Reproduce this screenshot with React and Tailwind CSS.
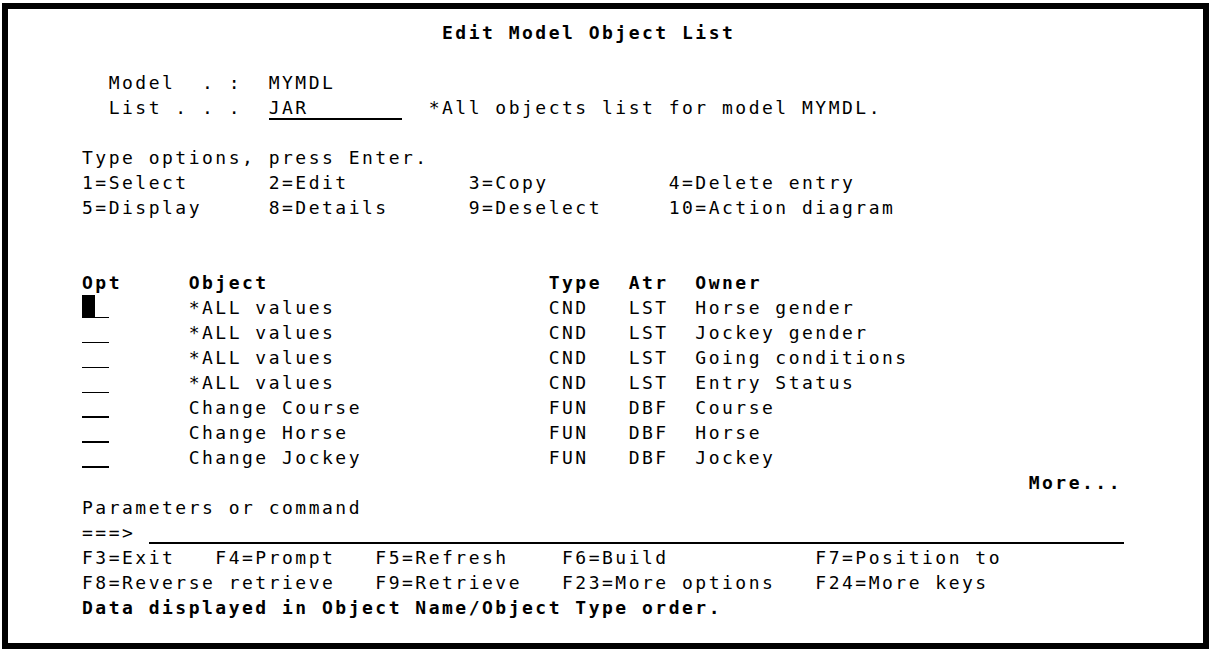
import React from 'react';

// 5250-style green-screen (here: black on white), one row = 25px, one column = 13.333px
const Row = ({ children, bold }) => (
    <div className={`h-[25px] leading-[25px] whitespace-pre ${bold ? 'font-bold' : ''}`}>{children}</div>
);

const OptField = ({ thick }) => (
    <span className={`inline-block align-top w-[26.667px] h-[23px] border-black ${thick ? 'border-b-2' : 'border-b'}`} />
);

const CursorField = () => (
    <span className="inline-flex align-top w-[26.667px] h-[23px]">
        <span className="w-[12.5px] h-[23px] bg-black" />
        <span className="ml-[0.833px] w-[13.333px] h-[23px] border-b border-black" />
    </span>
);

const rows = [
    { obj: '*ALL values', type: 'CND', atr: 'LST', owner: 'Horse gender' },
    { obj: '*ALL values', type: 'CND', atr: 'LST', owner: 'Jockey gender' },
    { obj: '*ALL values', type: 'CND', atr: 'LST', owner: 'Going conditions' },
    { obj: '*ALL values', type: 'CND', atr: 'LST', owner: 'Entry Status' },
    { obj: 'Change Course', type: 'FUN', atr: 'DBF', owner: 'Course' },
    { obj: 'Change Horse', type: 'FUN', atr: 'DBF', owner: 'Horse' },
    { obj: 'Change Jockey', type: 'FUN', atr: 'DBF', owner: 'Jockey' },
];

const App = () => {
    return (
        <div className="w-[1211px] h-[652px] bg-white pt-[3px] pl-[2px] text-black">
            <div className="w-[1207px] h-[646px] border-[6px] border-black pl-[74px] pt-[11px] font-['DejaVu_Sans_Mono',monospace] text-[18px] tracking-[2.496px]">
                <Row bold>{'                           Edit Model Object List'}</Row>
                <Row>{' '}</Row>
                <Row>{'  Model  . :  MYMDL'}</Row>
                <Row>
                    {'  List . . .  '}
                    <span className="inline-block align-top w-[133.333px] h-[25px] border-b-2 border-black">JAR</span>
                    {'  *All objects list for model MYMDL.'}
                </Row>
                <Row>{' '}</Row>
                <Row>{'Type options, press Enter.'}</Row>
                <Row>{'1=Select      2=Edit         3=Copy         4=Delete entry'}</Row>
                <Row>{'5=Display     8=Details      9=Deselect     10=Action diagram'}</Row>
                <Row>{' '}</Row>
                <Row>{' '}</Row>
                <Row bold>{'Opt     Object                     Type  Atr  Owner'}</Row>

                {rows.map((r, i) => (
                    <Row key={i}>
                        {i === 0 ? <CursorField /> : <OptField thick={i > 3} />}
                        {'      ' + r.obj.padEnd(27) + r.type.padEnd(6) + r.atr.padEnd(5) + r.owner}
                    </Row>
                ))}

                <Row bold>{'                                                                       More...'}</Row>
                <Row>{'Parameters or command'}</Row>
                <Row>
                    {'===> '}
                    <span className="inline-block align-top w-[975px] h-[24px] border-b-2 border-black" />
                </Row>
                <Row>{'F3=Exit   F4=Prompt   F5=Refresh    F6=Build           F7=Position to'}</Row>
                <Row>{'F8=Reverse retrieve   F9=Retrieve   F23=More options   F24=More keys'}</Row>
                <Row bold>{'Data displayed in Object Name/Object Type order.'}</Row>
            </div>
        </div>
    );
};

export default App;
